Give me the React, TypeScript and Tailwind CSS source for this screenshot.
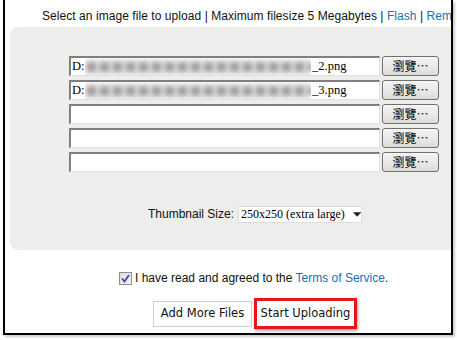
import React from "react";

const arial = { fontFamily: '"Liberation Sans", Arial, sans-serif' };
const serif = { fontFamily: '"Liberation Serif", "Noto Sans CJK TC", serif' };
const tahoma = { fontFamily: '"DejaVu Sans", Verdana, sans-serif' };

function FileRow({ prefix, suffix }: { prefix?: string; suffix?: string }) {
  return (
    <div className="flex items-center gap-[2px] h-[20px]">
      <div
        className="relative shrink-0 w-[311px] h-[20px] bg-white border-t-2 border-l-2 border-[#808080] border-r border-b border-r-[#e0e0e0] border-b-[#e0e0e0] overflow-hidden text-[12.5px] text-black"
        style={serif}
      >
        {prefix && (
          <>
            <span className="absolute left-[1px] top-0 bottom-0 flex items-center">{prefix}</span>
            <div className="absolute left-[14px] top-0 w-[226px] h-[18px] overflow-hidden">
              <div className="absolute inset-x-0 top-[2px] h-[14px] bg-[#cfcfcf] blur-[2px]" />
              <div className="absolute inset-x-0 top-[1px] h-[16px] bg-[radial-gradient(circle,#9a9a9a_0px,#ababab_3px,transparent_6px)] bg-[length:13px_16px] blur-[1.5px]" />
            </div>
            <span className="absolute left-[241px] top-0 bottom-0 flex items-center">{suffix}</span>
          </>
        )}
      </div>
      <button
        className="shrink-0 w-[57px] h-[20px] rounded-[3px] border border-[#707070] bg-gradient-to-b from-[#f6f6f6] to-[#dcdcdc] text-[12px] text-black flex items-center justify-center leading-none"
        style={{ fontFamily: '"Noto Sans CJK TC", sans-serif' }}
      >
        瀏覽…
      </button>
    </div>
  );
}

export default function App() {
  return (
    <div className="w-[457px] h-[340px] bg-white relative overflow-hidden">
      <div className="absolute left-[3px] top-0 w-[450px] h-[335px] border-l-2 border-r-2 border-b-2 border-black bg-white shadow-[2px_2px_2px_rgba(0,0,0,0.2)] overflow-hidden">
        <div className="flex flex-col">
          <div className="h-[24px] pl-[37px] pt-[9px] text-[12px] leading-[14px] tracking-[0.06px] text-[#111] whitespace-nowrap" style={arial}>
            Select an image file to upload | Maximum filesize 5 Megabytes |{" "}
            <span className="text-[#1a6fb5]">Flash</span> |{" "}
            <span className="text-[#1a6fb5]">Remote</span>
          </div>
          <div className="ml-[5px] mt-[3px] h-[223px] bg-[#ededeb] rounded-l-[8px] flex flex-col">
            <div className="pl-[59px] pt-[29px] flex flex-col gap-[4px]">
              <FileRow prefix="D:" suffix="_2.png" />
              <FileRow prefix="D:" suffix="_3.png" />
              <FileRow />
              <FileRow />
              <FileRow />
            </div>
            <div className="flex items-center pl-[138px] mt-[33px] gap-[4px]">
              <span className="text-[12px] text-[#111]" style={arial}>Thumbnail Size:</span>
              <div className="h-[17px] w-[124px] bg-white border border-[#dcdcdc] flex items-center pl-[2px] text-[12px] whitespace-nowrap" style={serif}>
                <span>250x250 (extra large)</span>
                <svg className="ml-[8px]" width="9" height="5" viewBox="0 0 9 5"><path d="M0 0h9L4.5 5z" fill="#222" /></svg>
              </div>
            </div>
          </div>
          <div className="flex items-center pl-[114px] mt-[19px] gap-[3px] text-[12px] text-[#111]" style={arial}>
            <div className="w-[13px] h-[13px] border border-[#8e8f8f] bg-gradient-to-br from-[#dcdcdc] to-[#f4f4f4] flex items-center justify-center">
              <svg width="9" height="9" viewBox="0 0 9 9"><path d="M1 4.5l2.5 3L8 1" stroke="#3b4fa0" strokeWidth="1.8" fill="none" /></svg>
            </div>
            <span>
              I have read and agreed to the <span className="text-[#1a6fb5]">Terms of Service</span>.
            </span>
          </div>
          <div className="flex items-center pl-[148px] mt-[11px] gap-[2px]" style={tahoma}>
            <div className="h-[26px] w-[99px] justify-center border border-[#cfcfcf] bg-white flex items-center text-[11.5px] text-[#111]">Add More Files</div>
            <div className="border-[3px] border-[#e8141c] shadow-[1px_2px_3px_rgba(0,0,0,0.35)]">
              <div className="h-[25px] w-[97px] justify-center bg-white flex items-center text-[11.5px] text-[#111]">Start Uploading</div>
            </div>
          </div>
        </div>
      </div>
    </div>
  );
}
